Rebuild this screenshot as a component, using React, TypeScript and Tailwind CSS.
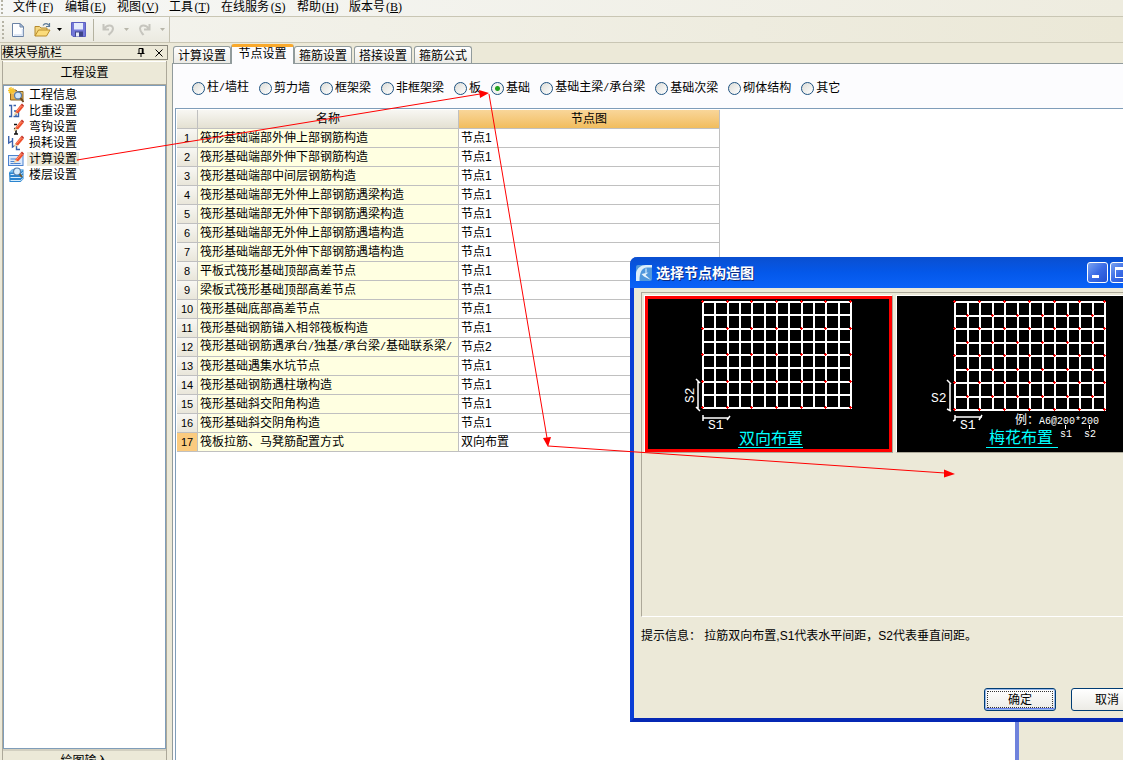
import type { ReactNode } from "react";

const menus: [string, string][] = [
  ["文件", "F"], ["编辑", "E"], ["视图", "V"], ["工具", "T"], ["在线服务", "S"], ["帮助", "H"], ["版本号", "B"],
];

const navItems = ["工程信息", "比重设置", "弯钩设置", "损耗设置", "计算设置", "楼层设置"];

const tabs = ["计算设置", "节点设置", "箍筋设置", "搭接设置", "箍筋公式"];

const members = ["柱/墙柱", "剪力墙", "框架梁", "非框架梁", "板", "基础", "基础主梁/承台梁", "基础次梁", "砌体结构", "其它"];

const rows: [string, string][] = [
  ["筏形基础端部外伸上部钢筋构造", "节点1"],
  ["筏形基础端部外伸下部钢筋构造", "节点1"],
  ["筏形基础端部中间层钢筋构造", "节点1"],
  ["筏形基础端部无外伸上部钢筋遇梁构造", "节点1"],
  ["筏形基础端部无外伸下部钢筋遇梁构造", "节点1"],
  ["筏形基础端部无外伸上部钢筋遇墙构造", "节点1"],
  ["筏形基础端部无外伸下部钢筋遇墙构造", "节点1"],
  ["平板式筏形基础顶部高差节点", "节点1"],
  ["梁板式筏形基础顶部高差节点", "节点1"],
  ["筏形基础底部高差节点", "节点1"],
  ["筏形基础钢筋锚入相邻筏板构造", "节点1"],
  ["筏形基础钢筋遇承台/独基/承台梁/基础联系梁/", "节点2"],
  ["筏形基础遇集水坑节点", "节点1"],
  ["筏形基础钢筋遇柱墩构造", "节点1"],
  ["筏形基础斜交阳角构造", "节点1"],
  ["筏形基础斜交阴角构造", "节点1"],
  ["筏板拉筋、马凳筋配置方式", "双向布置"],
];

/* Sets slashes in the half-width face so that they take half a character. */
function Label({ text }: { text: string }) {
  return (
    <span>
      {text.split(/(\/)/).map((part, i) =>
        part === "/" ? <span key={i} className="font-['Liberation_Mono',monospace] text-[10px]">/</span> : part,
      )}
    </span>
  );
}

function Pencil() {
  return (
    <g>
      <path d="M7 9 L12.5 2 L15.5 4 L10 10.5 Z" fill="#f0502c" />
      <path d="M8.5 8.5 L13.5 2.8" stroke="#ff9a78" strokeWidth="1" />
      <path d="M12.5 2 L14 0.5 L16 2.5 L15.5 4 Z" fill="#c8382a" />
      <path d="M7 9 L10 10.5 L5.5 12.5 Z" fill="#f3d9a8" />
    </g>
  );
}

function NavIcon({ index }: { index: number }) {
  const art: ReactNode[] = [
    <g key="info">
      <path d="M2.500 3 H8 L9.500 4.500 H15 V13 H2.500 Z" fill="#e8b04a" stroke="#8a6420" />
      <path d="M3.500 6 H14.500" stroke="#f8dc90" />
      <path d="M3 0 V7 M0 3.500 H7 M1 1 L5.500 6 M5.500 1 L1 6" stroke="#f7c52c" strokeWidth="1.300" />
      <circle cx="10" cy="8.500" r="3.500" fill="#cfe6fb" stroke="#5a7ca8" strokeWidth="1.300" />
      <path d="M12.500 11 L15.500 15" stroke="#6b4a20" strokeWidth="2" />
    </g>,
    <g key="density">
      <path d="M1 2.500 H3.500 V13.500 H1 M8 2.500 H5.500 M6 8 H8 V13.500 H5.500 M10.500 8 V13.500 H8.500" fill="none" stroke="#3a62ac" strokeWidth="1.400" />
      <Pencil />
    </g>,
    <g key="hook">
      <path d="M6 5.500 H9 M8 9 V15 M6 15 H10 M6 9.500 L8.500 10" fill="none" stroke="#111" strokeWidth="1.600" />
      <Pencil />
    </g>,
    <g key="loss">
      <path d="M0.700 1 V8 L4 6 M4.500 3 V12 L8 10 M8.500 9 V14.500 H12" fill="none" stroke="#3a62ac" strokeWidth="1.400" />
      <Pencil />
    </g>,
    <g key="calc">
      <rect x="0.500" y="4.500" width="14.500" height="10" fill="#dbe9fb" stroke="#4b82cf" />
      <path d="M2.500 8 H8 M2.500 10.500 H7 M2.500 12.500 H12.500" stroke="#4b82cf" />
      <Pencil />
    </g>,
    <g key="floor">
      <path d="M1 5.500 L4 2.500 H15.500 V12 L12.500 15 H1.500 Z" fill="#2a84cf" />
      <path d="M1 5.500 L4 2.500 H15.500 L12.500 5.500 Z" fill="#7cc2f2" />
      <path d="M2.500 7.500 H12.500 L15 5.500 M2.500 10.500 H12.500 L15 8.500 M2.500 13.500 H12.500 L15 11.500" fill="none" stroke="#d4ecfc" />
      <circle cx="9" cy="4.500" r="3.500" fill="#d8edfc" stroke="#557fae" strokeWidth="1.200" />
      <path d="M11.500 7 L14 10" stroke="#7b5a2a" strokeWidth="1.800" />
    </g>,
  ];
  return <svg viewBox="0 0 16 16" className="size-4 shrink-0" aria-hidden="true">{art[index]}</svg>;
}

function Grip() {
  return (
    <div className="flex flex-col gap-[2px]" aria-hidden="true">
      {[0, 1, 2, 3, 4].map((i) => <span key={i} className="size-[2px] bg-[#b5b3a5]" />)}
    </div>
  );
}

function DropArrow({ color }: { color: string }) {
  return (
    <svg viewBox="0 0 5 3" className="h-[3px] w-[5px]" aria-hidden="true"><path d="M0 0 H5 L2.500 3 Z" fill={color} /></svg>
  );
}

function Toolbar() {
  return (
    <div className="flex h-[26px] shrink-0 border-b border-[#c9c6b4] bg-linear-to-r from-[#f4f4ef] to-[#ebe8d7]">
      <div className="flex w-[170px] items-center border-r border-[#c5c2b2] bg-linear-to-b from-[#f6f6f2] to-[#ebeae0] pl-[2px]">
        <Grip />
        <button aria-label="新建" className="ml-[7px]">
          <svg viewBox="0 0 14 16" className="h-4 w-[14px]">
            <path d="M1.500 1.500 H9 L12.500 5 V14.500 H1.500 Z" fill="#fdfeff" stroke="#6a82a4" />
            <path d="M9 1.500 V5 H12.500 Z" fill="#bcd0ea" stroke="#6a82a4" />
            <path d="M3 13 H11.500 V7" fill="none" stroke="#d3e0f2" strokeWidth="1.500" />
          </svg>
        </button>
        <button aria-label="打开" className="ml-[9px]">
          <svg viewBox="0 0 17 16" className="h-4 w-[17px]">
            <path d="M1 14 V4.500 H5.500 L7 6 H13 V8" fill="#f3d680" stroke="#b58a2c" />
            <path d="M1 14 L4.500 8 H16 L12.500 14 Z" fill="#fbdc7c" stroke="#b98c2a" />
            <path d="M9 3.500 C10.500 1 13.500 1 15 3.500 M15.500 1 V4.500 H12" fill="none" stroke="#5c7a98" strokeWidth="1.200" />
          </svg>
        </button>
        <button aria-label="打开列表" className="ml-[6px]"><DropArrow color="#000" /></button>
        <button aria-label="保存" className="ml-[9px]">
          <svg viewBox="0 0 15 15" className="size-[15px]">
            <path d="M0.500 0.500 H14.500 V14.500 H2 L0.500 13 Z" fill="#7377d8" stroke="#5a5fc0" />
            <rect x="3" y="1" width="9" height="6.500" fill="#e4ebfb" />
            <rect x="4" y="9.500" width="8" height="5" fill="#3e4488" />
            <rect x="5" y="10.500" width="3" height="4" fill="#e8ecf8" />
          </svg>
        </button>
        <span className="ml-[7px] h-[22px] w-px bg-[#b4b2a0]" />
        <button aria-label="撤销" className="ml-2">
          <svg viewBox="0 0 13 13" className="size-[13px]">
            <path d="M1.500 1 V6.500 H7 M2 6 C5 1.500 10.500 1.500 11 5.500 C11 8.500 8.500 10 6.500 12" fill="none" stroke="#c6c5be" strokeWidth="2" />
          </svg>
        </button>
        <span className="ml-[9px] flex"><DropArrow color="#b8b6aa" /></span>
        <button aria-label="重做" className="ml-[9px]">
          <svg viewBox="0 0 13 13" className="size-[13px]">
            <path d="M11.500 1 V6.500 H6 M11 6 C8 1.500 2.500 1.500 2 5.500 C2 8.500 4 10 5.500 12" fill="none" stroke="#c6c5be" strokeWidth="2" />
          </svg>
        </button>
        <span className="ml-[9px] flex"><DropArrow color="#b8b6aa" /></span>
      </div>
    </div>
  );
}

function Sidebar() {
  return (
    <aside className="flex w-[168px] shrink-0 flex-col pl-px pt-[2px]">
      <div className="flex h-[15px] shrink-0 items-center border border-[#8c8a7e]">
        <h2 className="flex-1">模块导航栏</h2>
        <button aria-label="固定" className="mr-[10px]">
          <svg viewBox="0 0 8 9" className="h-[9px] w-2"><path d="M2 0.500 H6 V5 M2 0.500 V5 M0.500 5.500 H7.500 M4 5.500 V9" fill="none" stroke="#000" /><path d="M5.500 0.500 V5" stroke="#000" strokeWidth="1.500" /></svg>
        </button>
        <button aria-label="关闭" className="mr-1">
          <svg viewBox="0 0 8 8" className="size-2"><path d="M0.500 0.500 L7.500 7.500 M7.500 0.500 L0.500 7.500" stroke="#000" /></svg>
        </button>
      </div>
      <div className="mx-px mt-px flex flex-1 flex-col border-x border-[#aca899] bg-[#ece9d8]">
        <button className="h-[24px] shrink-0 border-y border-t-white border-b-[#aca899] text-center">工程设置</button>
        <ul className="flex-1 border border-[#7f9db9] bg-white pt-px">
          {navItems.map((item, i) => (
            <li key={item} className="flex h-4 items-center pl-1">
              <NavIcon index={i} />
              <a href="#" className={`ml-[3px] px-[2px] ${i === 4 ? "bg-[#ece9d8]" : ""}`}>{item}</a>
            </li>
          ))}
        </ul>
        <div className="h-[11px] shrink-0 overflow-hidden border-t-2 border-[#d2cfc0] text-center">
          <button className="h-5">绘图输入</button>
        </div>
      </div>
    </aside>
  );
}

function NodeTable() {
  return (
    <table className="w-[543px] table-fixed border-separate border-spacing-0">
      <thead>
        <tr className="h-[19px]">
          <th className="w-[21px] border-r border-b border-[#c0c0c0] bg-linear-to-b from-[#f8f7f3] to-[#e4e1d2] p-0"></th>
          <th className="w-[261px] border-r border-b border-[#c0c0c0] bg-linear-to-b from-[#f8f7f3] to-[#e4e1d2] p-0 font-normal">名称</th>
          <th className="w-[261px] border-r border-b border-[#c0c0c0] bg-linear-to-b from-[#f9d699] to-[#f1bd5d] p-0 font-normal">节点图</th>
        </tr>
      </thead>
      <tbody>
        {rows.map(([name, node], i) => (
          <tr key={name} className="h-[19px]">
            <th className={`border-r border-b border-[#c0c0c0] p-0 text-center text-[11px] font-normal ${i === 16 ? "bg-[#fbcb7f]" : "bg-linear-to-b from-[#f8f7f3] to-[#e9e6da]"}`}>
              {i + 1}
            </th>
            <td className="border-r border-b border-[#c0c0c0] bg-[#ffffe1] p-0 pl-[2px] whitespace-nowrap"><Label text={name} /></td>
            <td className="border-r border-b border-[#c0c0c0] bg-white p-0 pl-[2px]">{node}</td>
          </tr>
        ))}
      </tbody>
    </table>
  );
}

function Mesh({ x, y, w, h, staggered }: { x: number; y: number; w: number; h: number; staggered: boolean }) {
  const xs = Array.from({ length: 13 }, (_, i) => Math.round(x + (w * i) / 12));
  const ys = Array.from({ length: 9 }, (_, i) => Math.round(y + (h * i) / 8));
  const tie = (i: number, j: number) => (i % 2 === 0 && j % 2 === 0) || (staggered && i % 2 === 1 && j % 2 === 1);
  return (
    <g>
      {xs.map((v) => <path key={`v${v}`} d={`M${v} ${y - 1} V${y + h + 1}`} stroke="#fff" strokeWidth="2" />)}
      {ys.map((v) => <path key={`h${v}`} d={`M${x - 1} ${v} H${x + w + 1}`} stroke="#fff" strokeWidth="2" />)}
      {xs.flatMap((a, i) => ys.filter((_, j) => tie(i, j)).map((b) => (
        <path key={`${a}-${b}`} d={`M${a - 2} ${b - 0.5} H${a + 1} M${a - 0.5} ${b - 2} V${b + 1}`} stroke="#f00" />
      )))}
    </g>
  );
}

const cad = "font-['Liberation_Sans','Noto_Sans_CJK_SC',sans-serif]";
const cadMono = "font-['Liberation_Mono',monospace]";

function TwoWayDrawing() {
  return (
    <svg viewBox="0 0 247 156" className="block h-[156px] w-[247px] bg-black" role="img" aria-label="双向布置">
      <Mesh x={58} y={6} w={148} h={106} staggered={false} />
      <path d="M53 85 V113 M51 83 L55 87 M51 111 L55 115 M58 122 H84 M58 119 V125 M82 124 L85 120" stroke="#fff" strokeWidth="1.500" />
      <text x="63" y="133" fontSize="13" fill="#fff" className={cadMono}>S1</text>
      <text transform="translate(49 107) rotate(-90)" fontSize="13" fill="#fff" className={cadMono}>S2</text>
      <text x="94" y="148" fontSize="16" fill="#0ff" className={cad}>双向布置</text>
      <path d="M93 151.500 H158" stroke="#0ff" />
    </svg>
  );
}

function StaggeredDrawing() {
  return (
    <svg viewBox="0 0 247 156" className="block h-[156px] w-[247px] bg-black" role="img" aria-label="梅花布置">
      <Mesh x={58} y={6} w={150} h={108} staggered />
      <path d="M53 87 V115 M50 84 L54 88 M50 113 L54 115 M58 121 H85 M58 119 V124 L56 125 M82 124 L85 119" stroke="#fff" strokeWidth="1.500" />
      <text x="34" y="106" fontSize="13" fill="#fff" className={cadMono}>S2</text>
      <text x="63" y="133" fontSize="13" fill="#fff" className={cadMono}>S1</text>
      <text x="118" y="128" fontSize="12" fill="#fff" className={cad}>例：</text>
      <text x="142" y="128" fontSize="10" fill="#fff" className={cadMono}>A6@200*200</text>
      <text x="163" y="141" fontSize="10" fill="#fff" className={cadMono}>s1</text>
      <text x="187" y="141" fontSize="10" fill="#fff" className={cadMono}>s2</text>
      <path d="M168.500 129 V133 M192.500 129 V133" stroke="#fff" />
      <text x="92" y="147" fontSize="16" fill="#0ff" className={cad}>梅花布置</text>
      <path d="M89 151.500 H161" stroke="#0ff" />
    </svg>
  );
}

const caption = "flex size-[21px] items-center justify-center rounded-[3px] border border-white bg-linear-to-br from-[#7ba2f0] via-[#3a6be6] to-[#2350d0]";

function NodeDialog() {
  return (
    <section role="dialog" aria-label="选择节点构造图" className="absolute top-[257px] left-[630px] flex h-[465px] w-[530px] flex-col rounded-t-[7px] border-x-4 border-b-4 border-[#0a3ed6] border-b-[#0528b4] bg-[#ece9d8]">
      <header className="-mx-1 flex h-[31px] shrink-0 items-center rounded-t-[7px] bg-linear-to-b from-[#0a4fd0] via-[#0458ea] to-[#0a62f8] pr-[6px] pl-[6px]">
        <svg viewBox="0 0 16 16" className="size-4" aria-hidden="true">
          <rect width="16" height="16" rx="2" fill="#4f97dc" />
          <path d="M0 16 V8 C1 3 5 0 10 0 H16 V2.500 H11 C6 3 3.500 7 3.500 16 Z" fill="#dceefb" />
          <path d="M5.500 9 L12.500 7.500 L9.500 10 L15 15 L8 11.500 Z" fill="#e8f5fd" />
          <path d="M10 3.500 V9" stroke="#cfe8fb" strokeWidth="1.200" />
        </svg>
        <h1 className="ml-1 flex-1 text-sm font-bold text-white [text-shadow:1px_1px_0_#0a2a80]">选择节点构造图</h1>
        <div className="flex gap-[2px]">
          <button aria-label="最小化" className={caption}><span className="mt-[8px] mr-1 h-[3px] w-[7px] bg-white" /></button>
          <button aria-label="最大化" className={caption}><span className="size-[11px] border border-t-[3px] border-white" /></button>
          <button aria-label="关闭" className={caption}><span className="size-[11px] bg-white" /></button>
        </div>
      </header>
      <div className="mx-[7px] mt-[4px] flex h-[325px] shrink-0 items-start gap-[3px] border border-t-[#aca899] border-r-white border-b-white border-l-[#aca899] pt-[2px] pl-[2px]">
        <button className="relative border border-t-white border-r-[#aca899] border-b-[#aca899] border-l-white">
          <TwoWayDrawing />
          <span className="absolute inset-0 border-[3px] border-[#f00]" />
        </button>
        <button className="border border-t-white border-r-[#aca899] border-b-[#aca899] border-l-white">
          <StaggeredDrawing />
        </button>
      </div>
      <p className="mt-3 ml-[7px]">提示信息： 拉筋双向布置,S1代表水平间距，S2代表垂直间距。</p>
      <div className="mt-auto mr-[13px] mb-[7px] flex justify-end gap-[15px]">
        <button className="h-[23px] w-[72px] rounded-[3px] border border-[#003c74] bg-linear-to-b from-white to-[#ecebe5] p-[2px] shadow-[inset_0_0_0_1px_#98b8ea,inset_0_-2px_0_#6982ee]">
          <span className="flex h-full items-center justify-center border border-dotted border-[#333]">确定</span>
        </button>
        <button className="h-[23px] w-[72px] rounded-[3px] border border-[#003c74] bg-linear-to-b from-white to-[#ecebe5]">取消</button>
      </div>
    </section>
  );
}

function Arrows() {
  return (
    <svg viewBox="0 0 1123 760" className="pointer-events-none absolute top-0 left-0 h-[760px] w-[1123px]" aria-hidden="true">
      <path d="M77 160 L480 94 M489 94 L547 438 M548 446 L945 473" fill="none" stroke="#f00" />
      <path d="M489 93 L479 90 L480 98 Z M548 447 L543 438 L551 437 Z M955 474 L944 469.500 L944 477.500 Z" fill="#f00" />
    </svg>
  );
}

export default function App() {
  return (
    <div className="relative flex h-screen flex-col overflow-hidden bg-[#ece9d8] font-['Liberation_Sans','Noto_Sans_CJK_SC',sans-serif] text-xs leading-[14px] text-black">
      <nav className="flex h-[17px] shrink-0 items-start gap-[10px] overflow-hidden border-b border-[#c9c6b4] bg-linear-to-r from-[#f6f7f6] to-[#eeecdf] pl-px">
        <Grip />
        {menus.map(([name, key]) => (
          <button key={name} className="flex items-center whitespace-nowrap">
            {name}
            <span className="w-[18px] font-['Liberation_Serif',serif]">(<u>{key}</u>)</span>
          </button>
        ))}
      </nav>
      <Toolbar />
      <div className="flex min-h-0 flex-1">
        <Sidebar />
        <main className="ml-1 flex min-w-0 flex-1 flex-col pt-px">
          <div role="tablist" className="flex h-[19px] shrink-0 items-end gap-[2px] pl-px">
            {tabs.map((tab, i) => (
              <button
                key={tab}
                role="tab"
                aria-selected={i === 1}
                className={
                  i === 1
                    ? "relative -mx-[2px] -mb-px h-5 w-[63px] rounded-t-[3px] border-x border-t-[3px] border-[#919b9c] border-t-[#f9a92c] bg-[#fcfcfe] pb-[3px]"
                    : "h-[17px] w-[58px] rounded-t-[3px] border border-b-0 border-[#919b9c] bg-linear-to-b from-white to-[#ecebe6] pt-px whitespace-nowrap"
                }
              >
                {tab}
              </button>
            ))}
          </div>
          <div className="flex flex-1 flex-col border-t border-l border-[#919b9c] bg-[#fcfcfe] pl-[2px]">
            <div role="radiogroup" aria-label="构件类型" className="flex h-11 shrink-0 items-center gap-[10px] pt-1 pl-[17px]">
              {members.map((m) => (
                <label key={m} className="flex items-center gap-[2px] whitespace-nowrap">
                  <input
                    type="radio"
                    name="member"
                    defaultChecked={m === "基础"}
                    className="size-[13px] appearance-none rounded-full border border-[#1c5180] bg-linear-to-br from-[#dcdcd7] to-white checked:bg-[radial-gradient(circle,#21a121_0_2px,#f4f4f0_3px)]"
                  />
                  <Label text={m} />
                </label>
              ))}
            </div>
            <div className="flex-1 border-t border-l border-[#7f9db9] bg-white pt-px pl-px">
              <NodeTable />
            </div>
          </div>
        </main>
      </div>
      <div className="absolute top-[600px] right-0 bottom-0 left-[1015px] border-l-4 border-[#6f82dc] bg-[#ece9d8]" />
      <NodeDialog />
      <Arrows />
    </div>
  );
}
